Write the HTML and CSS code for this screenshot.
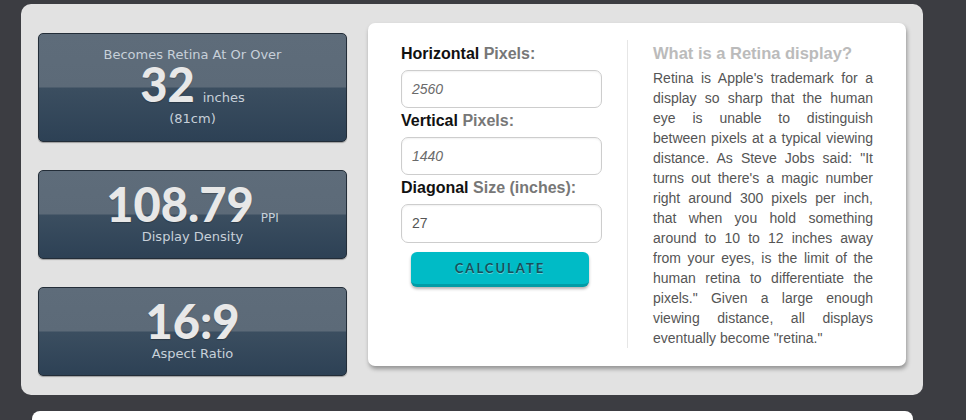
FILE: index.html
```html
<!DOCTYPE html>
<html>
<head>
<meta charset="utf-8">
<link rel="stylesheet" href="styles.css">
</head>
<body>
<div class="page">
  <div class="main">
    <div class="results">
      <div class="card card-tall">
        <div class="card-cap">Becomes Retina At Or Over</div>
        <div class="card-row"><span class="big">32</span><span class="unit">inches</span></div>
        <div class="card-sub">(81cm)</div>
      </div>
      <div class="card">
        <div class="card-row"><span class="big">108.79</span><span class="unit unit-sm">PPI</span></div>
        <div class="card-sub">Display Density</div>
      </div>
      <div class="card">
        <div class="card-row"><span class="big">16:9</span></div>
        <div class="card-sub">Aspect Ratio</div>
      </div>
    </div>
    <div class="panel">
      <div class="form">
        <div class="label first"><b>Horizontal</b> Pixels:</div>
        <div class="input placeholder">2560</div>
        <div class="label"><b>Vertical</b> Pixels:</div>
        <div class="input placeholder">1440</div>
        <div class="label"><b>Diagonal</b> Size (inches):</div>
        <div class="input last">27</div>
        <div class="btn">CALCULATE</div>
      </div>
      <div class="info">
        <h2 class="info-title">What is a Retina display?</h2>
        <p class="info-text">Retina is Apple's trademark for a display so sharp that the human eye is unable to distinguish between pixels at a typical viewing distance. As Steve Jobs said: "It turns out there's a magic number right around 300 pixels per inch, that when you hold something around to 10 to 12 inches away from your eyes, is the limit of the human retina to differentiate the pixels." Given a large enough viewing distance, all displays eventually become "retina."</p>
      </div>
    </div>
  </div>
  <div class="next"></div>
</div>
</body>
</html>
```
FILE: styles.css
```css
html, body {
  margin: 0;
  padding: 0;
  background: #3c3d42;
  overflow: hidden;
  height: 420px;
}
.page {
  padding: 4px 0 0 21px;
}
.main {
  width: 902px;
  box-sizing: border-box;
  background: #e2e2e2;
  border-radius: 10px;
  padding: 19px 16px 19px 17px;
  display: flex;
  align-items: flex-start;
}
.results {
  width: 309px;
  margin-top: 10px;
  display: flex;
  flex-direction: column;
  gap: 28px;
}
.card {
  height: 89px;
  box-sizing: border-box;
  border: 1px solid #232d38;
  border-radius: 5px;
  background: linear-gradient(#5e6c7a 0, #5c6a78 49.5%, #3b4e60 50.5%, #2d4155 100%);
  box-shadow: 0 1px 1px rgba(0,0,0,0.3);
  display: flex;
  flex-direction: column;
  align-items: center;
  font-family: "DejaVu Sans", Verdana, sans-serif;
  color: #c7d0d9;
  padding-top: 13px;
}
.card-tall {
  height: 109px;
  padding-top: 12px;
}
.card-cap {
  font-size: 13px;
  line-height: 18px;
}
.card-row {
  display: flex;
  align-items: baseline;
  height: 40px;
}
.big {
  display: inline-block;
  height: 40px;
  font-family: Lato, "Noto Sans", sans-serif;
  font-weight: 900;
  font-size: 47px;
  line-height: 40px;
  color: #e8e8e8;
  text-shadow: 0 1px 1px rgba(0,0,0,0.25);
}
.unit {
  font-size: 13px;
  margin-left: 8px;
}
.unit-sm {
  font-size: 12px;
  margin-left: 7px;
}
.card-sub {
  font-size: 13px;
  line-height: 18px;
  margin-top: 4px;
}
.card-tall .card-sub {
  margin-top: 6px;
}
.panel {
  margin-left: 21px;
  width: 538px;
  height: 343px;
  box-sizing: border-box;
  background: #fff;
  border-radius: 7px;
  box-shadow: 1px 3px 4px rgba(0,0,0,0.35);
  padding: 17px 33px 0 33px;
  display: flex;
  font-family: "Liberation Sans", Arial, sans-serif;
}
.form {
  width: 201px;
  display: flex;
  flex-direction: column;
}
.label {
  font-size: 16px;
  font-weight: bold;
  line-height: 18px;
  color: #777;
  margin-top: 4px;
  margin-bottom: 7px;
  white-space: nowrap;
}
.label.first {
  margin-top: 5px;
}
.label b {
  color: #111;
}
.input {
  height: 38px;
  box-sizing: border-box;
  border: 1px solid #cdcdcd;
  border-radius: 7px;
  box-shadow: inset 0 1px 2px rgba(0,0,0,0.06);
  padding-left: 10px;
  font-size: 14px;
  line-height: 36px;
  color: #555;
}
.input.placeholder {
  font-style: italic;
  color: #6a6a6a;
}
.input.last {
  height: 39px;
}
.btn {
  margin: 9px 0 0 10px;
  width: 178px;
  height: 35px;
  box-sizing: border-box;
  background: #00bbc6;
  border-bottom: 3px solid #009ca6;
  border-radius: 6px;
  box-shadow: 0 2px 3px rgba(0,0,0,0.3);
  text-align: center;
  font-family: Lato, "Noto Sans", sans-serif;
  font-weight: 700;
  font-size: 13px;
  letter-spacing: 2px;
  line-height: 32px;
  color: #17505b;
  text-shadow: 0 1px 0 rgba(255,255,255,0.35);
}
.info {
  margin-left: 25px;
  width: 246px;
  height: 308px;
  box-sizing: border-box;
  border-left: 1px solid #e6e6e6;
  padding-left: 25px;
}
.info-title {
  margin: 3px 0 5px;
  font-size: 16.5px;
  line-height: 20px;
  font-weight: bold;
  color: #bbb;
  white-space: nowrap;
}
.info-text {
  margin: 0;
  font-size: 14px;
  line-height: 20px;
  color: #555;
  text-align: justify;
}
.next {
  margin: 16px 0 0 11px;
  width: 881px;
  height: 60px;
  background: #fff;
  border-radius: 8px;
}
```
